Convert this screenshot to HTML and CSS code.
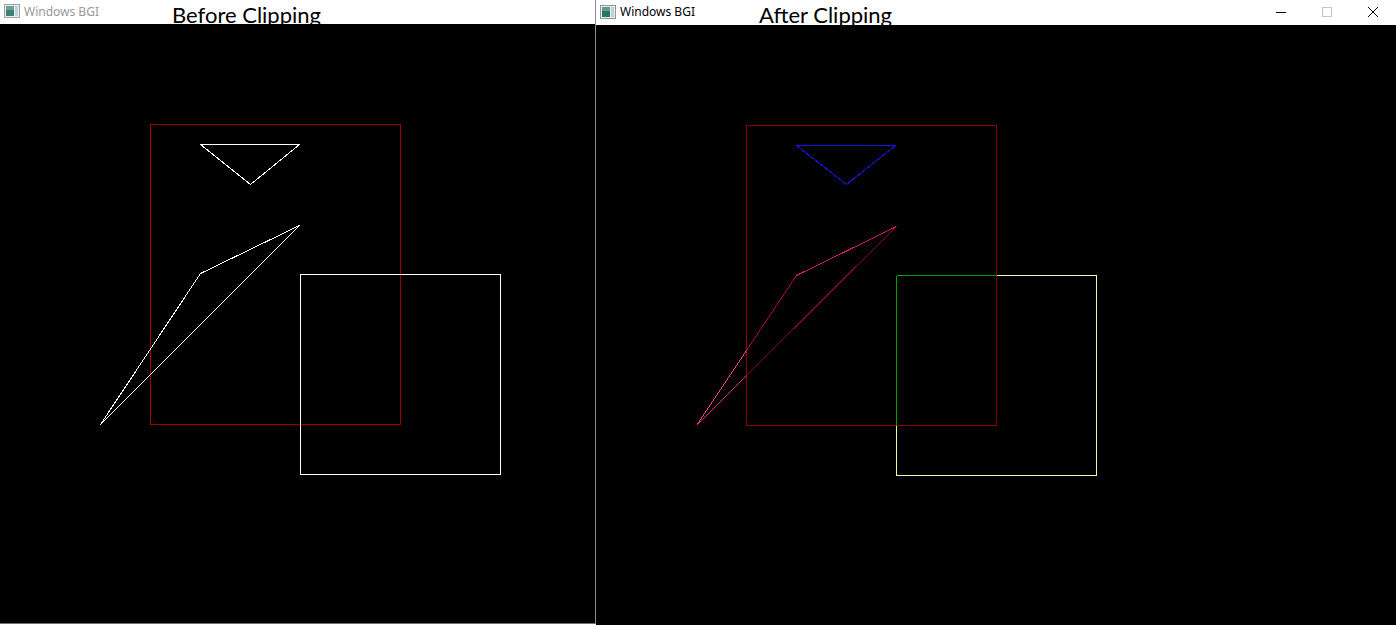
FILE: index.html
```html
<!DOCTYPE html>
<html>
<head>
<meta charset="utf-8">
<link rel="stylesheet" href="styles.css">
</head>
<body>
<div class="desk">
  <div class="win win-left">
    <div class="titlebar inactive">
      <svg class="appicon" width="16" height="14" viewBox="0 0 16 14">
        <rect x="0.5" y="0.5" width="15" height="13" fill="#e8eef0" stroke="#9aa6ac"/>
        <rect x="2" y="2" width="8" height="10" fill="#3f7f74"/>
        <rect x="2" y="2" width="8" height="4" fill="#6aa392"/>
        <rect x="11" y="2" width="3" height="10" fill="#c5d4da"/>
      </svg>
      <span class="wtitle">Windows BGI</span>
      <span class="label label-before">Before Clipping</span>
    </div>
    <svg class="canvas" width="595" height="599" viewBox="0 0 595 599" shape-rendering="crispEdges">
      <rect x="150.5" y="100.5" width="250" height="300" fill="none" stroke="#a00000"/>
      <polygon points="200.5,120.5 299.5,120.5 250.5,160.5" fill="none" stroke="#ffffff"/>
      <polygon points="100.5,400.5 200.5,249.5 299.5,201.5" fill="none" stroke="#ffffff"/>
      <rect x="300.5" y="250.5" width="200" height="200" fill="none" stroke="#ffffff"/>
    </svg>
  </div>
  <div class="win win-right">
    <div class="titlebar">
      <svg class="appicon" width="16" height="14" viewBox="0 0 16 14">
        <rect x="0.5" y="0.5" width="15" height="13" fill="#e8eef0" stroke="#8a969c"/>
        <rect x="2" y="2" width="8" height="10" fill="#2f7364"/>
        <rect x="2" y="2" width="8" height="4" fill="#5a9c86"/>
        <rect x="11" y="2" width="3" height="10" fill="#c0d0d6"/>
      </svg>
      <span class="wtitle">Windows BGI</span>
      <span class="label label-after">After Clipping</span>
      <div class="controls">
        <span class="ctl ctl-min"><svg width="10" height="10" viewBox="0 0 10 10"><line x1="0" y1="5.5" x2="10" y2="5.5" stroke="#000"/></svg></span>
        <span class="ctl ctl-max"><svg width="10" height="10" viewBox="0 0 10 10"><rect x="0.5" y="0.5" width="9" height="9" fill="none" stroke="#c4c4c4"/></svg></span>
        <span class="ctl ctl-close"><svg width="10" height="10" viewBox="0 0 10 10"><path d="M0 0 L10 10 M10 0 L0 10" stroke="#000" stroke-width="1"/></svg></span>
      </div>
    </div>
    <svg class="canvas" width="800" height="600" viewBox="0 0 800 600" shape-rendering="crispEdges">
      <rect x="150.5" y="100.5" width="250" height="300" fill="none" stroke="#8c0000"/>
      <polygon points="200.5,120.5 299.5,120.5 250.5,159.5" fill="none" stroke="#1414e6"/>
      <line x1="100.5" y1="400.5" x2="150.5" y2="325.5" stroke="#ff3d9e"/>
      <line x1="150.5" y1="325.5" x2="200.5" y2="250.5" stroke="#b0004f"/>
      <line x1="200.5" y1="250.5" x2="300.5" y2="201.5" stroke="#d01c6c"/>
      <line x1="100.5" y1="400.5" x2="150.5" y2="350.5" stroke="#d42376"/>
      <line x1="150.5" y1="350.5" x2="300.5" y2="201.5" stroke="#8c0046"/>
      <line x1="300.5" y1="250.5" x2="400.5" y2="250.5" stroke="#00a000"/>
      <line x1="300.5" y1="250.5" x2="300.5" y2="400.5" stroke="#00a000"/>
      <line x1="400.5" y1="250.5" x2="500.5" y2="250.5" stroke="#e6ffa0"/>
      <line x1="500.5" y1="250.5" x2="500.5" y2="450.5" stroke="#e6ffa0"/>
      <line x1="300.5" y1="450.5" x2="500.5" y2="450.5" stroke="#e6ffa0"/>
      <line x1="300.5" y1="400.5" x2="300.5" y2="450.5" stroke="#e6ffa0"/>
      <line x1="300.5" y1="400.5" x2="400.5" y2="400.5" stroke="#8c0000"/>
      <line x1="400.5" y1="100.5" x2="400.5" y2="400.5" stroke="#8c0000"/>
    </svg>
  </div>
</div>
</body>
</html>
```

FILE: styles.css
```css
html, body {
  margin: 0;
  padding: 0;
  background: #ffffff;
  overflow: hidden;
}
.desk {
  display: flex;
  width: 1396px;
  height: 625px;
  align-items: flex-start;
}
.win {
  display: flex;
  flex-direction: column;
  background: #000;
}
.win-left {
  width: 595px;
  height: 623px;
  border-right: 1px solid #8a8a8a;
  border-bottom: 1px solid #6e6e6e;
}
.win-right {
  width: 800px;
  height: 625px;
}
.titlebar {
  position: relative;
  display: flex;
  align-items: center;
  background: #ffffff;
  overflow: hidden;
  flex: none;
}
.win-left .titlebar { height: 24px; }
.win-right .titlebar { height: 25px; }
.appicon {
  margin-left: 4px;
  margin-top: -2px;
  flex: none;
}
.wtitle {
  margin-left: 4px;
  margin-top: -2px;
  font-family: "Noto Sans", "Open Sans", sans-serif;
  font-size: 12px;
  color: #000;
}
.inactive .wtitle { color: #999999; }
.label {
  position: absolute;
  top: 2px;
  font-family: Lato, "Open Sans", sans-serif;
  font-size: 22px;
  line-height: 26px;
  color: #000;
  white-space: nowrap;
}
.label-before { left: 172px; }
.label-after { left: 163px; }
.controls {
  margin-left: auto;
  display: flex;
  height: 100%;
}
.ctl {
  width: 46px;
  display: flex;
  align-items: center;
  justify-content: center;
  margin-top: -2px;
}
.canvas {
  display: block;
  flex: none;
  background: #000;
}
```
